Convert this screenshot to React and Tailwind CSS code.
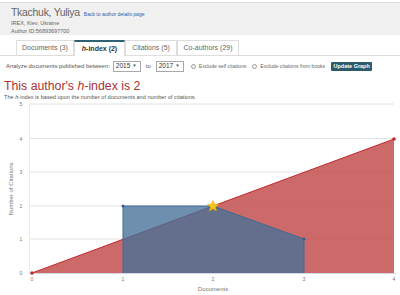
import React from "react";

const tabs = [
  { label: "Documents (3)", w: "w-[58px]" },
  { label: "h-index (2)", w: "w-[51px]", active: true },
  { label: "Citations (5)", w: "w-[52px]" },
  { label: "Co-authors (29)", w: "w-[62px]" },
];

function Select({ value }) {
  return (
    <div className="flex items-center justify-between w-[28px] h-[11px] border border-[#a9a9a9] bg-white pl-[2px] pr-[3px] text-[6.5px] leading-none text-[#333]">
      <span>{value}</span>
      <span className="text-[4.5px] text-[#555]">▼</span>
    </div>
  );
}

function Radio({ label }) {
  return (
    <div className="flex items-center gap-[3px]">
      <span className="w-[5px] h-[5px] rounded-full border border-[#999] bg-white" />
      <span className="text-[5.1px] text-[#666]">{label}</span>
    </div>
  );
}

function Chart() {
  const xs = [32, 123, 213, 304, 394];
  const ys = [274, 240, 207, 173, 139.5, 105];
  return (
    <svg width="400" height="193" viewBox="0 102 400 193" className="block">
      {ys.slice(1).map((y) => (
        <line key={y} x1="29" x2="394" y1={y} y2={y} stroke="#e2e2e2" strokeWidth="1" />
      ))}
      <line x1="29.5" x2="29.5" y1="105" y2="274" stroke="#e6edf4" strokeWidth="1" />
      <line x1="29" x2="396" y1="274.5" y2="274.5" stroke="#cfd8e3" strokeWidth="1" />
      {ys.map((y, i) => (
        <text key={i} x="21" y={y + 2} fontSize="5" fill="#777" textAnchor="middle">
          {i}
        </text>
      ))}
      {xs.map((x, i) => (
        <text key={i} x={x} y="282" fontSize="5" fill="#777" textAnchor="middle">
          {i}
        </text>
      ))}
      <text x="213" y="292" fontSize="6" fill="#777" textAnchor="middle">
        Documents
      </text>
      <text
        x="13"
        y="190"
        fontSize="6"
        fill="#777"
        textAnchor="middle"
        transform="rotate(-90 13 190)"
      >
        Number of Citations
      </text>

      {/* documents vs citations line */}
      <polygon points="32,274 394,140 394,274" fill="#c45151" fillOpacity="0.86" />
      <line x1="32" y1="274" x2="394" y2="140" stroke="#c0282d" strokeWidth="1" />
      <circle cx="32" cy="274" r="1.8" fill="#c0282d" />
      <circle cx="394" cy="140" r="1.8" fill="#c0282d" />

      {/* citations per document */}
      <polygon
        points="123,274 123,207 213,207 304,240 304,274"
        fill="#466f97"
        fillOpacity="0.78"
      />
      <polyline
        points="123,274 123,207 213,207 304,240 304,274"
        fill="none"
        stroke="#3d6a96"
        strokeWidth="1"
      />
      <circle cx="123" cy="207" r="1.5" fill="#2f5f8f" />
      <circle cx="304" cy="240" r="1.5" fill="#2f5f8f" />

      <polygon
        points="213,201.5 214.6,205.3 218.6,205.5 215.5,208.1 216.5,212 213,209.8 209.5,212 210.5,208.1 207.4,205.5 211.4,205.3"
        fill="#f5c518"
        stroke="#e0a800"
        strokeWidth="0.5"
      />
    </svg>
  );
}

export default function App() {
  return (
    <div className="w-[400px] h-[295px] overflow-hidden bg-white font-['Liberation_Sans',Arial,sans-serif] text-[#444]">
      <div className="mt-[2px] h-[33px] border-t border-[#dcdcdc] bg-[#f0f0f0] pl-[11px] pt-[3px]">
        <div className="flex items-baseline gap-[4px]">
          <span className="text-[10.5px] leading-[12px] text-[#666] tracking-[-0.3px]">Tkachuk, Yuliya</span>
          <span className="text-[5px] text-[#2a5db0]">Back to author details page</span>
        </div>
        <div className="text-[5.5px] leading-[8px] text-[#666]">IREX, Kiev, Ukraine</div>
        <div className="text-[5.5px] leading-[8px] text-[#666]">Author ID:56893697700</div>
      </div>

      <div className="mt-[5px] flex h-[16px] items-end border-b border-[#ddd] pl-[16px]">
        {tabs.map((t) => (
          <div
            key={t.label}
            className={`${t.w} h-[16px] -mb-px flex items-center justify-center text-[7px] ${
              t.active
                ? "border-t-2 border-x border-t-[#2e6273] border-x-[#ddd] bg-white font-bold text-[#333]"
                : "border border-[#ddd] bg-white text-[#666]"
            }`}
          >
            {t.active ? (
              <span>
                <span className="italic">h</span>-index (2)
              </span>
            ) : (
              t.label
            )}
          </div>
        ))}
      </div>

      <div className="mt-[5px] flex h-[11px] items-center pl-[6px] text-[5.9px] text-[#555]">
        <span>Analyze documents published between:</span>
        <div className="ml-[3px]">
          <Select value="2015" />
        </div>
        <span className="ml-[5px] mr-[5px]">to</span>
        <Select value="2017" />
        <div className="ml-[7px]">
          <Radio label="Exclude self citations" />
        </div>
        <div className="ml-[6px]">
          <Radio label="Exclude citations from books" />
        </div>
        <div className="ml-[6px] flex h-[9px] w-[41px] items-center justify-center rounded-[1px] bg-[#2d5b6c] text-[5.5px] font-bold text-white">
          Update Graph
        </div>
      </div>

      <div className="mt-[8px] pl-[4px] text-[12.3px] leading-[13px] text-[#a83232]">
        This author's <span className="italic">h</span>-index is 2
      </div>
      <div className="pl-[4px] text-[5.6px] leading-[8px] text-[#555]">
        The <span className="italic">h</span>-index is based upon the number of documents and number of citations.
      </div>

      <Chart />
    </div>
  );
}
